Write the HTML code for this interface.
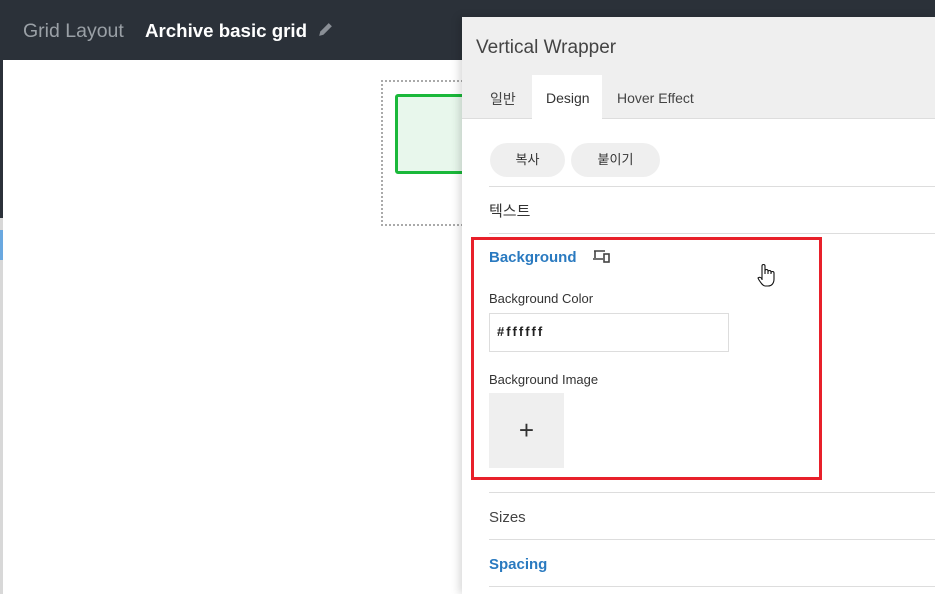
<!DOCTYPE html><html><head><style>
*{margin:0;padding:0;box-sizing:border-box}
body{width:935px;height:594px;overflow:hidden;background:#fff;font-family:"Liberation Sans","Noto Sans CJK KR",sans-serif;position:relative}
.a{position:absolute}
</style></head><body>
<div class="a" style="left:0;top:0;width:935px;height:60px;background:#2b3139"></div>
<div class="a" style="left:0;top:60px;width:3px;height:158px;background:#2b3139"></div>
<div class="a" style="left:0;top:218px;width:3px;height:376px;background:#d8d8d8"></div>
<div class="a" style="left:0;top:230px;width:3px;height:30px;background:#6aa8e0"></div>
<div class="a" style="left:23px;top:20px;font-size:19.5px;color:#9aa0a6">Grid Layout</div>
<div class="a" style="left:145px;top:20px;font-size:18.7px;color:#fff;font-weight:bold">Archive basic grid</div>
<svg class="a" style="left:316px;top:21px" width="18" height="18" viewBox="0 0 17 17"><path d="M3 14l1-4 8-8 3 3-8 8z" fill="#8a8f96"/></svg>
<div class="a" style="left:381px;top:80px;width:90px;height:146px;border:2px dotted #aaa"></div>
<div class="a" style="left:395px;top:94px;width:80px;height:80px;border:3px solid #1ab83a;border-radius:3px;background:#e8f7ec"></div>
<div class="a" style="left:462px;top:17px;width:473px;height:577px;background:#fff;box-shadow:-3px 0 8px rgba(0,0,0,.15)"></div>
<div class="a" style="left:462px;top:17px;width:473px;height:102px;background:#efefef;border-bottom:1px solid #ddd"></div>
<div class="a" style="left:476px;top:37px;font-size:19px;color:#444">Vertical Wrapper</div>
<div class="a" style="left:532px;top:75px;width:70px;height:45px;background:#fff"></div>
<div class="a" style="left:490px;top:89px;font-size:14px;color:#444">일반</div>
<div class="a" style="left:546px;top:90px;font-size:14px;color:#333">Design</div>
<div class="a" style="left:617px;top:90px;font-size:14px;color:#444">Hover Effect</div>
<div class="a" style="left:490px;top:143px;width:75px;height:34px;border-radius:17px;background:#efefef;font-size:13px;color:#333;text-align:center;line-height:34px">복사</div>
<div class="a" style="left:571px;top:143px;width:89px;height:34px;border-radius:17px;background:#efefef;font-size:13px;color:#333;text-align:center;line-height:34px">붙이기</div>
<div class="a" style="left:489px;top:186px;width:446px;height:1px;background:#ddd"></div>
<div class="a" style="left:489px;top:200px;font-size:15px;color:#333">텍스트</div>
<div class="a" style="left:489px;top:233px;width:446px;height:1px;background:#ddd"></div>
<div class="a" style="left:471px;top:237px;width:351px;height:243px;border:3px solid #e8202a"></div>
<div class="a" style="left:489px;top:249px;font-size:15px;color:#2a7ac0;font-weight:bold">Background</div>
<svg class="a" style="left:592px;top:249px" width="20" height="15" viewBox="0 0 20 15"><path d="M2 2h11M3 2v7M1 10h10" stroke="#444" stroke-width="1.6" fill="none"/><rect x="12" y="5" width="5" height="8" stroke="#444" stroke-width="1.6" fill="none"/></svg>
<svg class="a" style="left:756px;top:263px" width="20" height="26" viewBox="0 0 20 26"><path d="M6 17V3a1.5 1.5 0 013 0v8M9 8a1.5 1.5 0 013 0v3M12 9a1.5 1.5 0 013 0v2M15 10a1.5 1.5 0 013 0v6c0 4-2 7-6 7H9c-2 0-4-3-6-6l-1-2c1-1 3-1 4 1" fill="#fff" stroke="#111" stroke-width="1.1"/></svg>
<div class="a" style="left:489px;top:291px;font-size:13px;color:#333">Background Color</div>
<div class="a" style="left:489px;top:313px;width:240px;height:39px;border:1px solid #ddd;font-size:13px;color:#222;padding:10px 7px;letter-spacing:2px;font-weight:bold">#ffffff</div>
<div class="a" style="left:489px;top:372px;font-size:13px;color:#333">Background Image</div>
<div class="a" style="left:489px;top:393px;width:75px;height:75px;background:#efefef;font-size:26px;color:#333;text-align:center;line-height:75px;font-weight:300">+</div>
<div class="a" style="left:489px;top:492px;width:446px;height:1px;background:#ddd"></div>
<div class="a" style="left:489px;top:509px;font-size:15px;color:#444">Sizes</div>
<div class="a" style="left:489px;top:539px;width:446px;height:1px;background:#ddd"></div>
<div class="a" style="left:489px;top:556px;font-size:15px;color:#2a7ac0;font-weight:bold">Spacing</div>
<div class="a" style="left:489px;top:586px;width:446px;height:1px;background:#ddd"></div>
</body></html>
